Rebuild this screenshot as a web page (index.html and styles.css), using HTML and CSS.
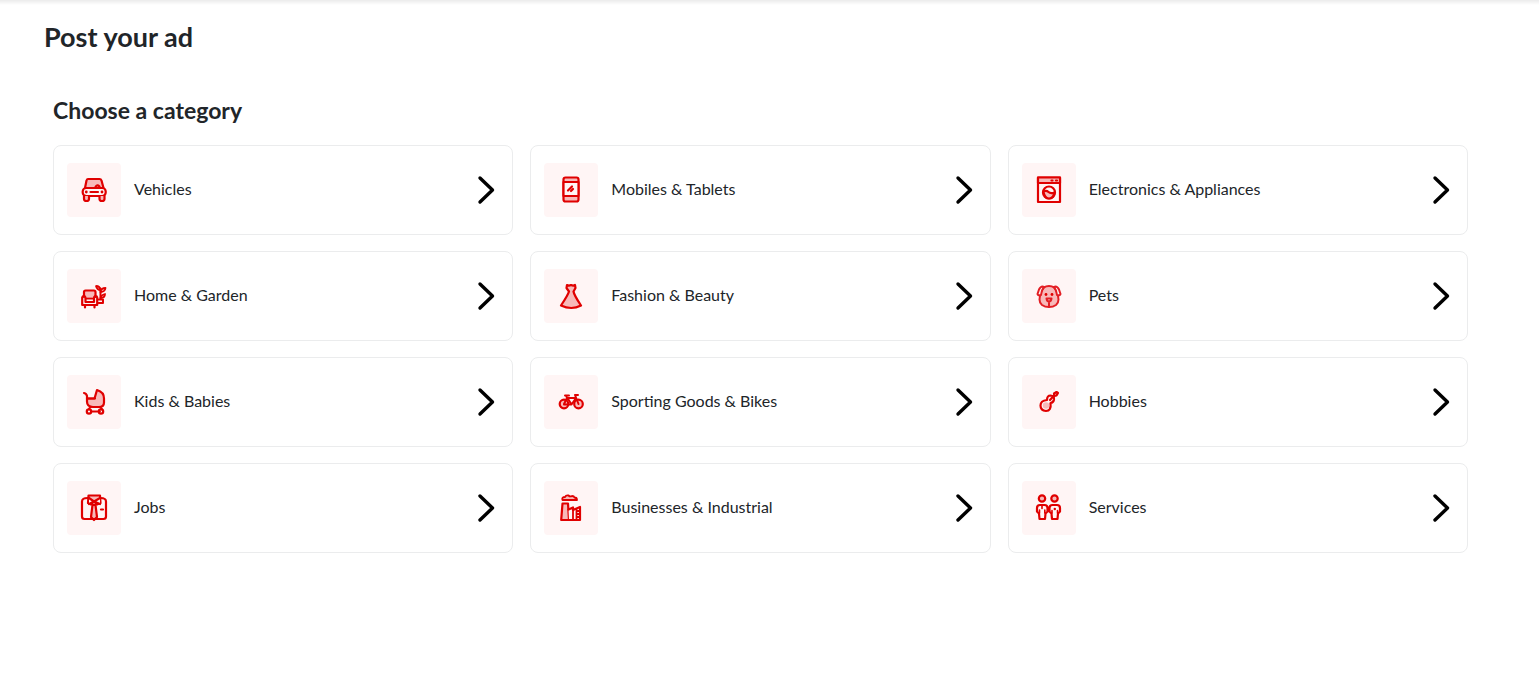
FILE: index.html
```html
<!DOCTYPE html>
<html lang="en">
<head>
    <meta charset="UTF-8">
    <meta name="viewport" content="width=device-width, initial-scale=1.0">
    <title>Post your ad</title>
    <link rel="stylesheet" href="styles.css">
</head>
<body>
    <!-- shared arrow -->
    <svg class="sprite" aria-hidden="true">
        <symbol id="chevron" viewBox="0 0 18 30">
            <path d="M3 3 15.500 15 3 27" fill="none" stroke="#000" stroke-width="3.400" stroke-linecap="round" stroke-linejoin="round"/>
        </symbol>
    </svg>

    <main class="page">
        <h1 class="page-title">Post your ad</h1>

        <section class="categories">
            <h2 class="section-title">Choose a category</h2>

            <div class="category-grid">
                <a class="category" href="#">
                    <span class="category-icon">
                        <svg viewBox="0 0 28 28">
                            <path class="tint" d="M8 3h11.500q1.500 0 2 1.500L23.500 12H5L6.500 4.500Q7 3 8 3z"/>
                            <path d="M15.500 11q1.500-3 4-.5"/>
                            <rect x="2.700" y="12" width="23" height="8" rx="3.500"/>
                            <path d="M10.500 16h7.500"/>
                            <path class="blush" d="M4 20v3q0 2 2.500 2T9 23v-3M19.500 20v3q0 2 2.500 2t2.500-2v-3"/>
                            <circle class="dot" cx="6.300" cy="16" r="1.400"/>
                            <circle class="dot" cx="22" cy="16" r="1.400"/>
                        </svg>
                    </span>
                    <span class="category-name">Vehicles</span>
                    <svg class="chevron"><use href="#chevron"/></svg>
                </a>
                <a class="category" href="#">
                    <span class="category-icon">
                        <svg viewBox="0 0 28 28">
                            <rect class="tint" x="6.500" y="1.500" width="15" height="24" rx="2"/>
                            <path class="paper" d="M6.500 6h15v14h-15z"/>
                            <path d="m11 14.500 4-4M14 15l2-2"/>
                        </svg>
                    </span>
                    <span class="category-name">Mobiles &amp; Tablets</span>
                    <svg class="chevron"><use href="#chevron"/></svg>
                </a>
                <a class="category" href="#">
                    <span class="category-icon">
                        <svg viewBox="0 0 28 28">
                            <path class="paper" d="M3 1.500h22V26H3z"/>
                            <path class="tint" d="M3 1.500h22V7H3z"/>
                            <path d="M16.500 4.500h1M21 4.500h1"/>
                            <circle class="paper" cx="14" cy="16.500" r="6"/>
                            <path class="tint" d="M8.500 15.500q3-1.500 5 .5t6 .5q-1 6-5.500 6t-5.500-7z"/>
                        </svg>
                    </span>
                    <span class="category-name">Electronics &amp; Appliances</span>
                    <svg class="chevron"><use href="#chevron"/></svg>
                </a>

                <a class="category" href="#">
                    <span class="category-icon">
                        <svg viewBox="0 0 28 28">
                            <path class="tint" d="M4 15v-5q0-1.500 1.500-1.500h8.500Q15.500 8.500 15.500 10v5"/>
                            <path d="M5.500 20v-3.500Q5.500 14 4 14t-1.800 1.500V23h15v-7.500Q17 14 15.500 14T14 16.500V20zM5.500 16.500H14M5 23v2.500M14.500 23v2.500"/>
                            <path d="M18.500 21h4.500v-3.500h-4.500M20.500 17V6.500" stroke-width="2"/>
                            <path class="blush" d="M20.500 8q-3.500 0-4.500-4 4 0 4.500 4M20.500 10q.5-4 5-4-.5 4-5 4M20.500 16q.5-3 4.500-4 0 4-4.500 4" stroke-width="1.800"/>
                        </svg>
                    </span>
                    <span class="category-name">Home &amp; Garden</span>
                    <svg class="chevron"><use href="#chevron"/></svg>
                </a>
                <a class="category" href="#">
                    <span class="category-icon">
                        <svg viewBox="0 0 28 28">
                            <path class="tint" d="M10 3q2 1.200 4 0 2.200 1.200 4 0l.5 3-2 3.500Q17 13 24 23.500q-9.500 5-20 0Q11 13 12 9.500L9.500 6z"/>
                        </svg>
                    </span>
                    <span class="category-name">Fashion &amp; Beauty</span>
                    <svg class="chevron"><use href="#chevron"/></svg>
                </a>
                <a class="category" href="#">
                    <span class="category-icon">
                        <svg class="soft" viewBox="0 0 28 28">
                            <path class="tint" d="M9 5.500Q11 4 14 4t5 1.500q4 4 4.500 12 0 3.500-2.500 5.500-3 2-7 2t-7-2q-2.500-2-2.500-5.500Q5 9.500 9 5.500z"/>
                            <path class="paper" d="M9 4.800Q6 3.500 4 7.500L2.500 12q.5 2 3.500 1 .5-5 3-8.200zM19 4.800q3-1.300 5 2.700l1.500 4.500q-.5 2-3.500 1-.5-5-3-8.200z"/>
                            <circle class="dot" cx="11" cy="12.500" r="1.400"/>
                            <circle class="dot" cx="17" cy="12.500" r="1.400"/>
                            <path d="M11.500 16.500h5q-.5 3-2.500 3t-2.500-3zM14 19.500V25"/>
                        </svg>
                    </span>
                    <span class="category-name">Pets</span>
                    <svg class="chevron"><use href="#chevron"/></svg>
                </a>

                <a class="category" href="#">
                    <span class="category-icon">
                        <svg viewBox="0 0 28 28">
                            <path class="tint" d="M14.500 10.500 17 2q7 2 7 8.500v4q0 4.500-5 4.500h-6q-6 0-6-5.500v-3z"/>
                            <path d="M4 5q2.500.5 3 3v2.500h8"/>
                            <path d="M9 20.500 11 19M20 19l2 2M11 23.500h9" stroke-width="1.800"/>
                            <circle cx="9" cy="23.500" r="2.200"/>
                            <circle cx="21" cy="23.500" r="2.200"/>
                        </svg>
                    </span>
                    <span class="category-name">Kids &amp; Babies</span>
                    <svg class="chevron"><use href="#chevron"/></svg>
                </a>
                <a class="category" href="#">
                    <span class="category-icon">
                        <svg viewBox="0 0 28 28">
                            <circle class="tint" cx="7" cy="16" r="4.300"/>
                            <circle class="tint" cx="21.500" cy="16" r="4.300"/>
                            <path d="M7 16 10 10h8.500M10.500 10l4 6.500H7M14.500 16.500 19 10M21.500 16 18 7h3M8 7.500h4M10 10 9 7.500" stroke-width="2"/>
                        </svg>
                    </span>
                    <span class="category-name">Sporting Goods &amp; Bikes</span>
                    <svg class="chevron"><use href="#chevron"/></svg>
                </a>
                <a class="category" href="#">
                    <span class="category-icon">
                        <svg viewBox="0 0 28 28">
                            <path class="paper" d="M12 12q0-4.500 3.500-4.500 4 .5 3.500 4-.5 3-3.500 3.500 1 8-4.500 8-5.500-.5-5.500-5.500 0-5 6.500-5.500z"/>
                            <circle class="blush" cx="11" cy="17.500" r="3.200" stroke="none"/>
                            <path d="m15 12 5-5.500"/>
                            <path class="tint" d="m19 5.500 2.500-1.500 1.500 1-1.500 2.500-2 .5z"/>
                        </svg>
                    </span>
                    <span class="category-name">Hobbies</span>
                    <svg class="chevron"><use href="#chevron"/></svg>
                </a>

                <a class="category" href="#">
                    <span class="category-icon">
                        <svg viewBox="0 0 28 28">
                            <path class="paper" d="M7.500 4Q2 4 2 7.500v15Q2 25 4.500 25h19q2.500 0 2.500-2.500v-15Q26 4 20.500 4"/>
                            <path class="tint" d="m12.500 11-1.500 12 3 3 3-3-1.500-12z"/>
                            <path class="tint" d="M8.500 1.500H20l.5 7.500-3.500 1.500-3-3-3 3L8 9z"/>
                            <path class="paper" d="m9 4 5 3.500L9 10M20 4l-6 3.500 6 2.500"/>
                            <path d="M21 15.500h2"/>
                        </svg>
                    </span>
                    <span class="category-name">Jobs</span>
                    <svg class="chevron"><use href="#chevron"/></svg>
                </a>
                <a class="category" href="#">
                    <span class="category-icon">
                        <svg viewBox="0 0 28 28">
                            <path class="tint" d="M5.500 6Q4.500 3 8 3q1-2 3.500-1.500Q13 3 15 2q2 0 2.500 1.500Q20 3.500 20 6z" stroke-width="1.800"/>
                            <path class="tint" d="m5.500 9.500-1.300 16.500H12L11 9.500z"/>
                            <path class="paper" d="M11.500 15.500 16 13.500v2.500l7-3V26H12"/>
                            <path d="M16 16v10M19.500 26V15.500M20.500 17H23M20.500 20H23M20.500 23H23" stroke-width="1.800"/>
                        </svg>
                    </span>
                    <span class="category-name">Businesses &amp; Industrial</span>
                    <svg class="chevron"><use href="#chevron"/></svg>
                </a>
                <a class="category" href="#">
                    <span class="category-icon">
                        <svg viewBox="0 0 28 28">
                            <circle class="blush" cx="7" cy="4.500" r="3.200"/>
                            <circle class="blush" cx="19.500" cy="4.500" r="3.200"/>
                            <path class="paper" d="M5 11h4.500q3 0 3 3v3.500l-2 2L10 25H4.500L4 19.500l-2-2V14q0-3 3-3zM17.500 11H22q3 0 3 3v3.500l-2 2-.5 5.500h-5.500l-.5-5.500-2-2V14q0-3 3-3z"/>
                            <path d="M7 11v3.500M4.500 16v3M9.800 16v3M17 16.500V19M22.500 16.500V19" stroke-width="1.600"/>
                            <circle class="dot" cx="19.800" cy="15" r="1.200"/>
                        </svg>
                    </span>
                    <span class="category-name">Services</span>
                    <svg class="chevron"><use href="#chevron"/></svg>
                </a>
            </div>
        </section>
    </main>
</body>
</html>
```
FILE: styles.css
```css
* {
    box-sizing: border-box;
}

body {
    margin: 0;
    background: linear-gradient(#ebebeb, #fff 5px) no-repeat #fff;
    color: #212529;
    font-family: Lato, "Liberation Sans", sans-serif;
    font-size: 16px;
    line-height: 24px;
}

.sprite {
    display: none;
}

.page {
    padding: 20px 71px 40px 44px;
}

.page-title {
    margin: 0 0 40px;
    font-size: 27px;
    line-height: 34px;
}

.categories {
    padding-left: 9px;
}

.section-title {
    margin: 0 0 19px;
    font-size: 23px;
    line-height: 32px;
}

.category-grid {
    display: grid;
    grid-template-columns: repeat(3, 1fr);
    gap: 16px 17px;
}

.category {
    display: flex;
    align-items: center;
    gap: 13px;
    padding: 17px 17px 17px 13px;
    border: 1px solid #ebeced;
    border-radius: 8px;
    background: #fff;
    color: inherit;
    text-decoration: none;
}

.category-icon {
    display: flex;
    align-items: center;
    justify-content: center;
    width: 54px;
    height: 54px;
    border-radius: 4px;
    background: #fff5f5;
}

.category-icon svg {
    width: 28px;
    height: 28px;
    fill: none;
    stroke: #e00000;
    stroke-width: 2.2;
    stroke-linecap: round;
    stroke-linejoin: round;
}

.category-icon .soft {
    stroke: #e31e24;
    stroke-width: 2;
}

.tint,
.blush {
    fill: #f7b9b9;
}

.paper {
    fill: #fff5f5;
}

.dot {
    fill: #e00000;
    stroke: none;
}

.category-name {
    flex: 1;
    padding-bottom: 3px;
}

.chevron {
    width: 18px;
    height: 30px;
}
```
